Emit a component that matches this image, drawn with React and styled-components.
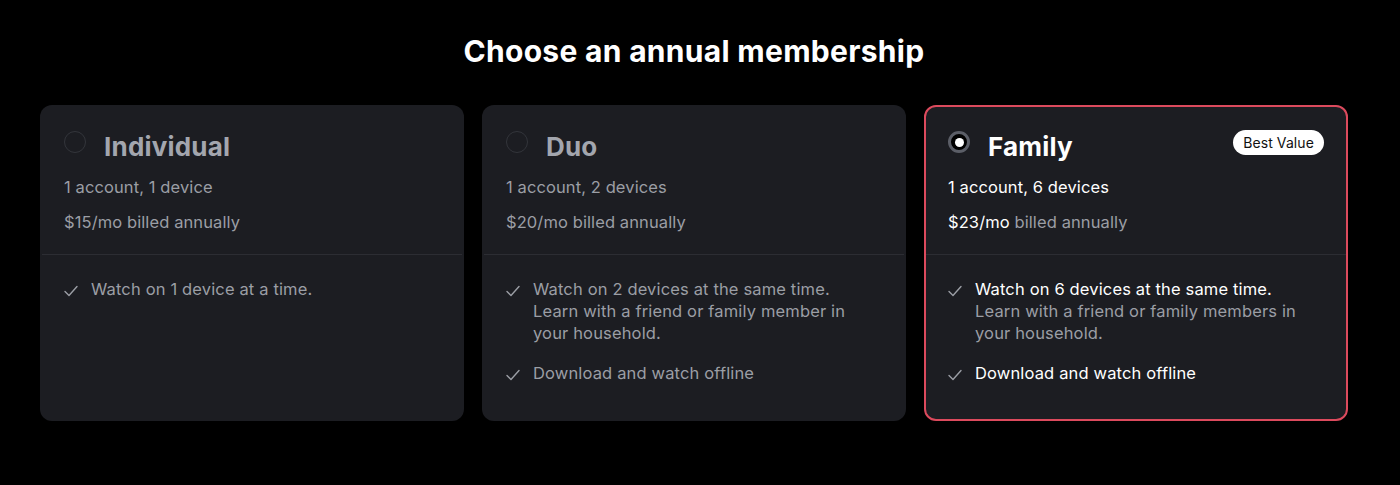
import React from 'react';
import styled, { createGlobalStyle } from 'styled-components';

const GlobalStyle = createGlobalStyle`
  html, body {
    margin: 0;
    padding: 0;
    background: #000;
  }
  body {
    font-family: Inter, "Noto Sans", sans-serif;
    -webkit-font-smoothing: antialiased;
  }
`

const Page = styled.div`
  box-sizing: border-box;
  width: 100%;
  min-height: 485px;
  padding: 30px 52px 0 40px;
  background: #000;
`

const Heading = styled.h1`
  margin: 0 0 35px;
  height: 40px;
  line-height: 42px;
  text-align: center;
  color: #fff;
  font-size: 30px;
  font-weight: 700;
  letter-spacing: 0.3px;
`

const Plans = styled.div`
  display: grid;
  grid-template-columns: repeat(3, 1fr);
  gap: 18px;
`

const Card = styled.div`
  box-sizing: border-box;
  height: 316px;
  background: #1c1d22;
  border-radius: 12px;
  border: 2px solid ${p => (p.$selected ? '#dc4a5d' : 'transparent')};
  overflow: hidden;
`

const Header = styled.div`
  position: relative;
  padding: 22px 22px 20px;
  border-bottom: 1px solid #2c2d33;
`

const TitleRow = styled.div`
  display: flex;
  align-items: flex-start;
  gap: 18px;
`

const Radio = styled.span`
  box-sizing: border-box;
  flex: none;
  width: 22px;
  height: 22px;
  margin-top: 2px;
  border-radius: 50%;
  border: ${p => (p.$checked ? '3px solid #5b5e67' : '1px solid #33353b')};
  background: ${p => (p.$checked ? '#000' : 'transparent')};
  display: flex;
  align-items: center;
  justify-content: center;

  &::after {
    content: '';
    display: ${p => (p.$checked ? 'block' : 'none')};
    width: 9px;
    height: 9px;
    border-radius: 50%;
    background: #fff;
  }
`

const Title = styled.div`
  font-size: 26px;
  line-height: 36px;
  font-weight: 700;
  letter-spacing: 0.2px;
  color: ${p => (p.$selected ? '#fff' : '#a3a6ae')};
`

const Badge = styled.span`
  position: absolute;
  top: 23px;
  right: 22px;
  height: 25px;
  padding: 0 10px;
  display: flex;
  align-items: center;
  border-radius: 13px;
  background: #fff;
  color: #111;
  font-size: 14px;
  letter-spacing: 0.1px;
`

const Line = styled.div`
  margin-top: ${p => p.$gap}px;
  font-size: 16.5px;
  line-height: 24px;
  letter-spacing: 0.1px;
  color: ${p => (p.$bright ? '#fff' : '#9b9ea5')};
`

const Strong = styled.span`
  color: ${p => (p.$bright ? '#fff' : 'inherit')};
`

const Features = styled.ul`
  list-style: none;
  margin: 0;
  padding: 23px 22px 0;
  display: flex;
  flex-direction: column;
  gap: 18px;
`

const Feature = styled.li`
  display: flex;
  align-items: flex-start;
  gap: 13px;
  font-size: 16.5px;
  line-height: 22px;
  letter-spacing: 0.15px;
  color: ${p => (p.$bright ? '#fff' : '#9b9ea5')};
`

const Sub = styled.span`
  display: block;
  color: #9b9ea5;
`

const CheckIcon = styled.svg`
  flex: none;
  width: 14px;
  height: 14px;
  margin-top: 6px;
  color: #9b9ea5;
`

const Check = () => (
  <CheckIcon viewBox="0 0 14 14" fill="none">
    <path d="M1 7.5 L5 11.5 L13 2.5" stroke="currentColor" strokeWidth="1.4" strokeLinecap="round" strokeLinejoin="round" />
  </CheckIcon>
);

const plans = [
  {
    name: 'Individual',
    devices: '1 account, 1 device',
    price: '$15/mo',
    features: [{ main: 'Watch on 1 device at a time.' }],
  },
  {
    name: 'Duo',
    devices: '1 account, 2 devices',
    price: '$20/mo',
    features: [
      { main: 'Watch on 2 devices at the same time.', sub: 'Learn with a friend or family member in your household.' },
      { main: 'Download and watch offline' },
    ],
  },
  {
    name: 'Family',
    devices: '1 account, 6 devices',
    price: '$23/mo',
    selected: true,
    badge: 'Best Value',
    features: [
      { main: 'Watch on 6 devices at the same time.', sub: 'Learn with a friend or family members in your household.' },
      { main: 'Download and watch offline' },
    ],
  },
];

const App = () => (
  <>
    <GlobalStyle />
    <Page>
      <Heading>Choose an annual membership</Heading>
      <Plans>
        {plans.map(plan => (
          <Card key={plan.name} $selected={plan.selected}>
            <Header>
              <TitleRow>
                <Radio $checked={plan.selected} />
                <Title $selected={plan.selected}>{plan.name}</Title>
              </TitleRow>
              {plan.badge && <Badge>{plan.badge}</Badge>}
              <Line $gap={10} $bright={plan.selected}>{plan.devices}</Line>
              <Line $gap={11}>
                <Strong $bright={plan.selected}>{plan.price}</Strong> billed annually
              </Line>
            </Header>
            <Features>
              {plan.features.map(f => (
                <Feature key={f.main} $bright={plan.selected}>
                  <Check />
                  <div>
                    {f.main}
                    {f.sub && <Sub>{f.sub}</Sub>}
                  </div>
                </Feature>
              ))}
            </Features>
          </Card>
        ))}
      </Plans>
    </Page>
  </>
);

export default App;
